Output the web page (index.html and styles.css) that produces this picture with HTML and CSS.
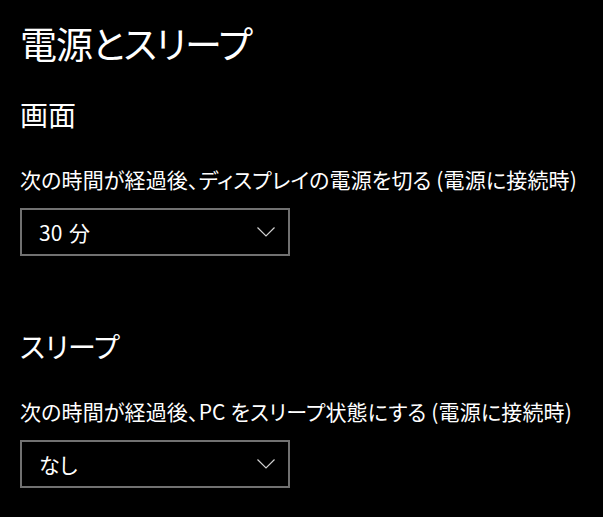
FILE: index.html
```html
<!DOCTYPE html>
<html lang="ja">
<head>
  <meta charset="UTF-8" />
  <meta name="viewport" content="width=device-width, initial-scale=1.0"/>
  <title>電源とスリープ</title>
  <link rel="stylesheet" href="styles.css">
</head>
<body>
  <div id="settings">
    <h1>電源とスリープ</h1>

    <div class="section">
      <h2>画面</h2>
      <div class="label">次の時間が経過後、ディスプレイの電源を切る (電源に接続時)</div>
      <div class="combo">
        <span class="value">30 分</span>
        <svg class="chevron" width="18" height="10" viewBox="0 0 18 10">
          <polyline points="0.5,0.5 9,9 17.5,0.5" />
        </svg>
      </div>
    </div>

    <div class="section sleep">
      <h2>スリープ</h2>
      <div class="label">次の時間が経過後、PC をスリープ状態にする (電源に接続時)</div>
      <div class="combo">
        <span class="value">なし</span>
        <svg class="chevron" width="18" height="10" viewBox="0 0 18 10">
          <polyline points="0.5,0.5 9,9 17.5,0.5" />
        </svg>
      </div>
    </div>
  </div>
</body>
</html>
```

FILE: styles.css
```css
body {
  background-color: #000;
  color: #fff;
  font-family: "Noto Sans CJK JP", "Noto Sans", sans-serif;
  font-feature-settings: "palt";
  margin: 0;
}
#settings {
  padding: 24px 0 0 20px;
}
h1 {
  font-size: 37px;
  line-height: 38px;
  font-weight: 400;
  letter-spacing: -1px;
  margin: 0;
}
h2 {
  font-size: 28px;
  line-height: 28px;
  font-weight: 400;
  margin: 0;
}
.section {
  margin-top: 38px;
}
.section.sleep {
  margin-top: 76px;
}
.label {
  margin-top: 41px;
  font-size: 21px;
  line-height: 21px;
  letter-spacing: 0.15px;
}
.combo {
  margin-top: 18px;
  width: 270px;
  height: 48px;
  box-sizing: border-box;
  border: 2px solid #717171;
  display: flex;
  align-items: center;
  justify-content: space-between;
  padding: 0 13px 0 17px;
}
.value {
  font-size: 21px;
  word-spacing: 2px;
}
.chevron polyline {
  fill: none;
  stroke: #d0d0d0;
  stroke-width: 1.2;
}
```
